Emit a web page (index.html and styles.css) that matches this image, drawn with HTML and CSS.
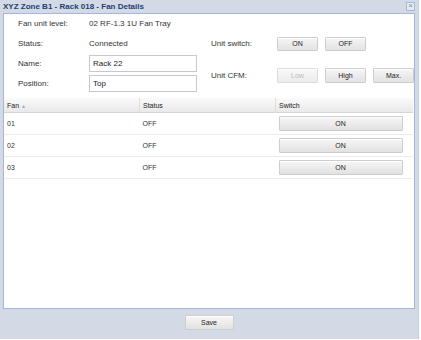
FILE: index.html
```html
<!DOCTYPE html>
<html lang="en">
<head>
    <meta charset="UTF-8">
    <meta name="viewport" content="width=device-width, initial-scale=1.0">
    <title>Fan Details</title>
    <link rel="stylesheet" href="styles.css">
</head>
<body>
    <div class="window">
        <div class="titlebar">
            <span class="title">XYZ Zone B1 - Rack 018 - Fan Details</span>
            <span class="close">&#215;</span>
        </div>
        <div class="panel">
            <div class="form">
                <div class="form-left">
                    <div class="row"><label>Fan unit level:</label><span>02 RF-1.3 1U Fan Tray</span></div>
                    <div class="row"><label>Status:</label><span>Connected</span></div>
                    <div class="row"><label>Name:</label><input type="text" value="Rack 22"></div>
                    <div class="row"><label>Position:</label><input type="text" value="Top"></div>
                </div>
                <div class="form-right">
                    <div class="row row-switch">
                        <label>Unit switch:</label>
                        <button class="btn">ON</button>
                        <button class="btn">OFF</button>
                    </div>
                    <div class="row row-cfm">
                        <label>Unit CFM:</label>
                        <button class="btn" disabled>Low</button>
                        <button class="btn">High</button>
                        <button class="btn">Max.</button>
                    </div>
                </div>
            </div>

            <table class="grid">
                <thead>
                    <tr>
                        <th class="col-fan">Fan <span class="sort">&#9650;</span></th>
                        <th class="col-status">Status</th>
                        <th class="col-switch">Switch</th>
                    </tr>
                </thead>
                <tbody>
                    <tr><td>01</td><td>OFF</td><td><button class="btn btn-wide">ON</button></td></tr>
                    <tr><td>02</td><td>OFF</td><td><button class="btn btn-wide">ON</button></td></tr>
                    <tr><td>03</td><td>OFF</td><td><button class="btn btn-wide">ON</button></td></tr>
                </tbody>
            </table>
        </div>
        <div class="footer">
            <button class="btn btn-save">Save</button>
        </div>
    </div>
</body>
</html>
```

FILE: styles.css
```css
body {
    margin: 0;
    background: #fff;
    font-family: "Liberation Sans", Arial, sans-serif;
    font-size: 8px;
    color: #222;
}
.window {
    width: 419px;
    height: 339px;
    background: #d3dae5;
    border-right: 1px solid #c3cde0;
    box-sizing: border-box;
    display: flex;
    flex-direction: column;
    padding: 0 3px;
}
.titlebar {
    height: 13px;
    display: flex;
    align-items: center;
    justify-content: space-between;
}
.title {
    font-weight: bold;
    color: #1d3f73;
    font-size: 8px;
}
.close {
    width: 7px;
    height: 7px;
    border: 1px solid #a9b9d3;
    background: #e4eaf3;
    color: #6f87b0;
    font-size: 8px;
    line-height: 6px;
    text-align: center;
    margin-right: 0;
}
.panel {
    height: 296px;
    background: #fff;
    border: 1px solid #a4b6d9;
    box-sizing: border-box;
}
.form {
    display: flex;
    height: 84px;
}
.form-left {
    width: 192px;
    padding-left: 14px;
    display: flex;
    flex-direction: column;
    gap: 1px;
}
.row {
    display: flex;
    align-items: center;
    height: 19px;
}
.form-left label {
    width: 71px;
    color: #333;
}
.form-left span {
    color: #333;
}
.form-left input {
    width: 108px;
    height: 17px;
    box-sizing: border-box;
    border: 1px solid #c4c8d2;
    padding: 0 3px;
    font-family: inherit;
    font-size: 8px;
    color: #222;
}
.form-right {
    padding-left: 0;
    padding-top: 20px;
    display: flex;
    flex-direction: column;
    gap: 13px;
    margin-left: 14px;
}
.form-right label {
    width: 66px;
    color: #333;
}
.form-right .btn {
    width: 41px;
    height: 14px;
    margin-right: 7px;
}
.row-cfm .btn {
    height: 15px;
}
.btn {
    background: linear-gradient(#f6f6f6, #e2e2e2);
    border: 1px solid #cdcdcd;
    border-radius: 1px;
    font-family: inherit;
    font-size: 7px;
    color: #222;
    padding: 0;
    box-shadow: inset 0 1px 0 #fff;
}
.btn:disabled {
    color: #bbb;
    background: linear-gradient(#f8f8f8, #ececec);
    border-color: #dcdcdc;
}
.grid {
    width: 409px;
    border-collapse: collapse;
    table-layout: fixed;
}
.grid th {
    height: 14px;
    padding: 0 3px;
    text-align: left;
    font-weight: normal;
    font-size: 7px;
    color: #222;
    background: linear-gradient(#fafafa, #e9e9e9);
    border-bottom: 1px solid #d5d5d5;
    border-right: 1px solid #dedede;
}
.grid th.col-fan {
    width: 129px;
}
.grid th.col-status {
    width: 129px;
}
.grid th.col-switch {
    border-right: none;
}
.sort {
    font-size: 5px;
    color: #8fa8cf;
}
.grid td {
    height: 21px;
    padding: 0 3px;
    font-size: 7px;
    color: #333;
    border-bottom: 1px solid #ececec;
}
.btn-wide {
    width: 124px;
    height: 15px;
}
.footer {
    flex: 1;
    display: flex;
    justify-content: center;
    padding-top: 6px;
}
.btn-save {
    width: 49px;
    height: 15px;
}
```
